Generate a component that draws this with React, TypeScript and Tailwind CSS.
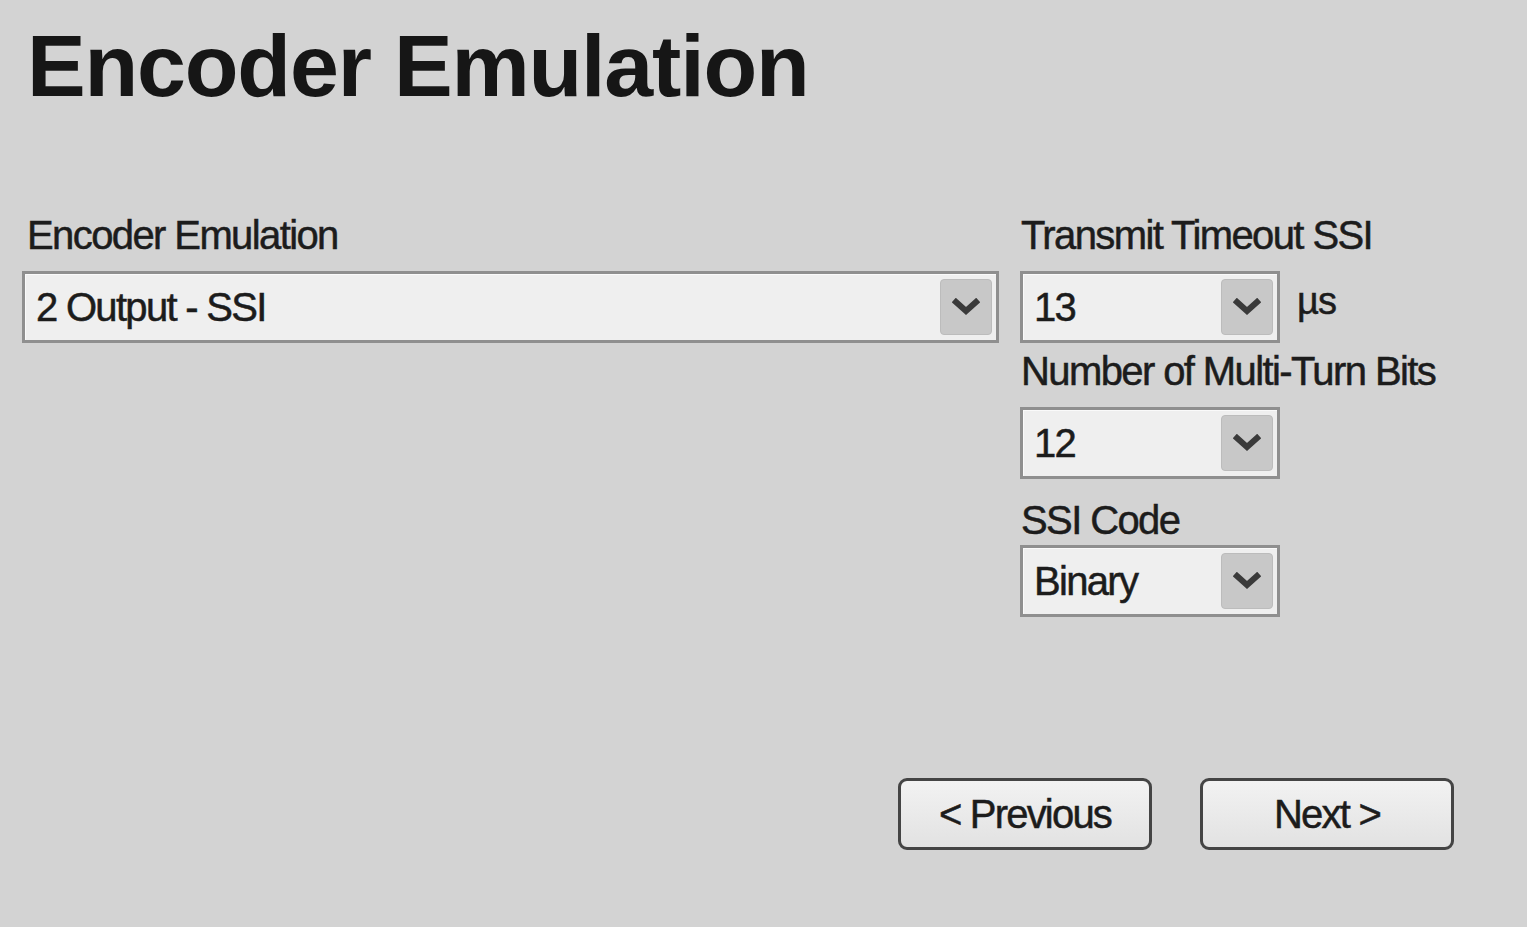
import React from "react";

const font = { fontFamily: '"Liberation Sans", Arial, sans-serif' };

function Chevron() {
  return (
    <svg width="28" height="18" viewBox="0 0 28 18">
      <path d="M4 4 L14 13 L24 4" fill="none" stroke="#3a3a3a" strokeWidth="6" strokeLinecap="square" strokeLinejoin="miter" />
    </svg>
  );
}

function Combo({ value, className }: { value: string; className: string }) {
  return (
    <div className={`${className} h-[72px] flex items-center border-[3px] border-[#8f8f8f] bg-[#efefef] shadow-[inset_1px_1px_0_#fafafa]`}>
      <span className="flex-1 pl-[11px] text-[40px] leading-[40px] tracking-[-1.7px] text-[#1c1c1c] whitespace-nowrap [-webkit-text-stroke:0.5px_#1c1c1c]">{value}</span>
      <div className="mr-[4px] w-[52px] h-[56px] rounded-[4px] bg-[#c8c8c8] border border-[#bcbcbc] flex items-center justify-center">
        <Chevron />
      </div>
    </div>
  );
}

function Label({ children, className = "" }: { children: React.ReactNode; className?: string }) {
  return (
    <div className={`h-[40px] text-[40px] leading-[40px] tracking-[-1.6px] text-[#1c1c1c] whitespace-nowrap [-webkit-text-stroke:0.5px_#1c1c1c] ${className}`}>{children}</div>
  );
}

function Btn({ children }: { children: React.ReactNode }) {
  return (
    <button className="w-[254px] h-[72px] rounded-[9px] border-[3px] border-[#444444] bg-gradient-to-b from-[#f2f2f2] to-[#e2e2e2] text-[40px] leading-[40px] tracking-[-1.8px] text-[#1c1c1c] [-webkit-text-stroke:0.5px_#1c1c1c] flex items-center justify-center">
      {children}
    </button>
  );
}

export default function App() {
  return (
    <div style={font} className="w-full h-[927px] bg-[#d3d3d3] pt-[22px] pl-[22px] overflow-hidden">
      <h1 className="ml-[5px] text-[88px] leading-[88px] font-bold tracking-[-1.2px] text-[#161616]">Encoder Emulation</h1>
      <div className="mt-[105px] flex gap-[21px]">
        <div className="w-[977px] flex flex-col">
          <Label className="pl-[5px]">Encoder Emulation</Label>
          <Combo value="2 Output - SSI" className="mt-[16px] w-full" />
        </div>
        <div className="flex flex-col">
          <Label className="pl-[1px]">Transmit Timeout SSI</Label>
          <div className="mt-[16px] flex items-start">
            <Combo value="13" className="w-[260px]" />
            <span className="ml-[17px] mt-[10px] text-[38px] leading-[40px] tracking-[-1px] text-[#1c1c1c] [-webkit-text-stroke:0.5px_#1c1c1c]">µs</span>
          </div>
          <Label className="mt-[8px] pl-[1px]">Number of Multi-Turn Bits</Label>
          <Combo value="12" className="mt-[16px] w-[260px]" />
          <Label className="mt-[21px] pl-[1px]">SSI Code</Label>
          <Combo value="Binary" className="mt-[5px] w-[260px]" />
        </div>
      </div>
      <div className="mt-[161px] flex justify-end gap-[48px] pr-[73px]">
        <Btn>&lt; Previous</Btn>
        <Btn>Next &gt;</Btn>
      </div>
    </div>
  );
}
